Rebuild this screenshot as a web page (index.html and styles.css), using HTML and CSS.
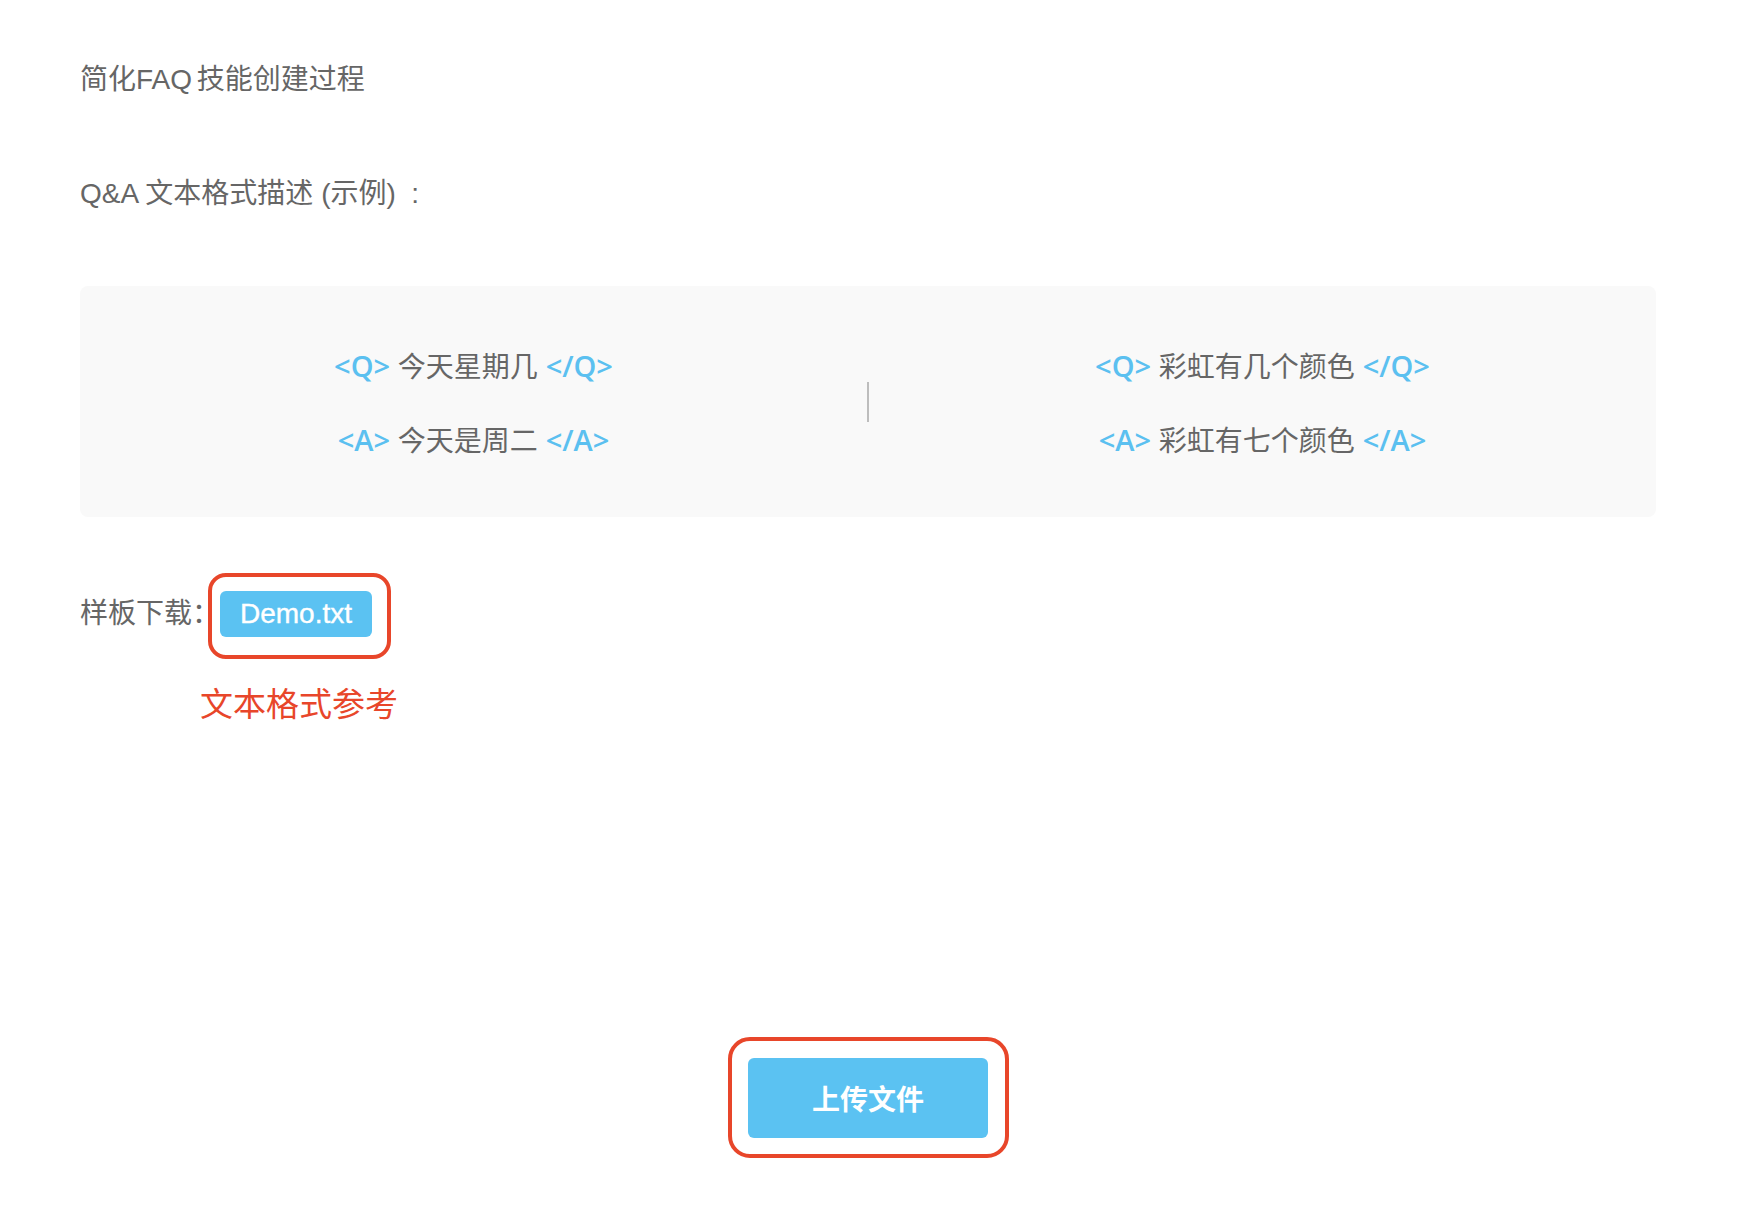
FILE: index.html
```html
<!DOCTYPE html>
<html lang="zh-CN">
<head>
<meta charset="utf-8">
<title>简化FAQ 技能创建过程</title>
<link rel="stylesheet" href="styles.css">
</head>
<body>
<div class="page">
  <h1 class="title">简化FAQ 技能创建过程</h1>
  <p class="subtitle">Q&amp;A 文本格式描述 (示例)&nbsp; :</p>

  <div class="example">
    <div class="col">
      <div class="line"><span class="tag">&lt;Q&gt;</span> 今天星期几 <span class="tag">&lt;/Q&gt;</span></div>
      <div class="line"><span class="tag">&lt;A&gt;</span> 今天是周二 <span class="tag">&lt;/A&gt;</span></div>
    </div>
    <div class="divider"></div>
    <div class="col">
      <div class="line"><span class="tag">&lt;Q&gt;</span> 彩虹有几个颜色 <span class="tag">&lt;/Q&gt;</span></div>
      <div class="line"><span class="tag">&lt;A&gt;</span> 彩虹有七个颜色 <span class="tag">&lt;/A&gt;</span></div>
    </div>
  </div>

  <div class="download">
    <span class="download-label">样板下载：</span>
    <span class="demo-wrap">
      <a class="demo-btn" href="#">Demo.txt</a>
      <span class="mark mark-demo"></span>
    </span>
  </div>
  <p class="note">文本格式参考</p>

  <div class="upload-row">
    <span class="upload-wrap">
      <button class="upload-btn" type="button">上传文件</button>
      <span class="mark mark-upload"></span>
    </span>
  </div>
</div>
</body>
</html>
```
FILE: styles.css
```css
* { box-sizing: border-box; }

html, body {
  margin: 0;
  padding: 0;
  background: #ffffff;
}

body {
  font-family: "Liberation Sans", "Noto Sans CJK SC", sans-serif;
  color: #666666;
  font-size: 28px;
}

.page {
  width: 1576px;
  margin-left: 80px;
  padding-top: 60px;
  padding-bottom: 74px;
}

.title {
  margin: 0;
  font-size: 28px;
  font-weight: normal;
  line-height: 40px;
  word-spacing: -3px;
}

.subtitle {
  margin: 74px 0 0;
  font-size: 28px;
  line-height: 40px;
}

.example {
  margin-top: 72px;
  height: 231px;
  background: #f9f9f9;
  border-radius: 8px;
  display: grid;
  grid-template-columns: 1fr 2px 1fr;
  align-items: center;
}

.col {
  display: flex;
  flex-direction: column;
  align-items: center;
  gap: 32px;
  padding-top: 5px;
}

.line {
  line-height: 40px;
  white-space: pre;
  color: #666666;
}

.tag {
  color: #5bc0f0;
  font-family: "Open Sans", "Liberation Sans", sans-serif;
  font-weight: 600;
  font-size: 29px;
}

.divider {
  width: 2px;
  height: 40px;
  background: #bdbdbd;
}

.download {
  margin-top: 74px;
  display: flex;
  align-items: center;
  height: 46px;
}

.download-label {
  width: 140px;
  line-height: 40px;
}

.demo-wrap {
  position: relative;
  display: inline-block;
}

.demo-btn {
  display: flex;
  align-items: center;
  justify-content: center;
  width: 152px;
  height: 46px;
  background: #5bc2f2;
  color: #ffffff;
  border-radius: 6px;
  text-decoration: none;
  font-family: "Liberation Sans", sans-serif;
  font-size: 28px;
  -webkit-text-stroke: 0.4px #ffffff;
}

.mark {
  position: absolute;
  border: 4px solid #e8462a;
  pointer-events: none;
}

.mark-demo {
  left: -12px;
  top: -18px;
  width: 183px;
  height: 86px;
  border-radius: 18px;
}

.note {
  margin: 48px 0 0 120px;
  color: #e8462a;
  font-size: 33px;
  line-height: 40px;
}

.upload-row {
  margin-top: 333px;
  display: flex;
  justify-content: center;
}

.upload-wrap {
  position: relative;
  display: inline-block;
}

.upload-btn {
  display: block;
  width: 240px;
  height: 80px;
  border: none;
  border-radius: 6px;
  background: #5bc2f2;
  color: #ffffff;
  font-family: "Noto Sans CJK SC", sans-serif;
  font-size: 28px;
  font-weight: bold;
  padding: 0;
}

.mark-upload {
  left: -20px;
  top: -21px;
  width: 281px;
  height: 121px;
  border-radius: 22px;
}
```
